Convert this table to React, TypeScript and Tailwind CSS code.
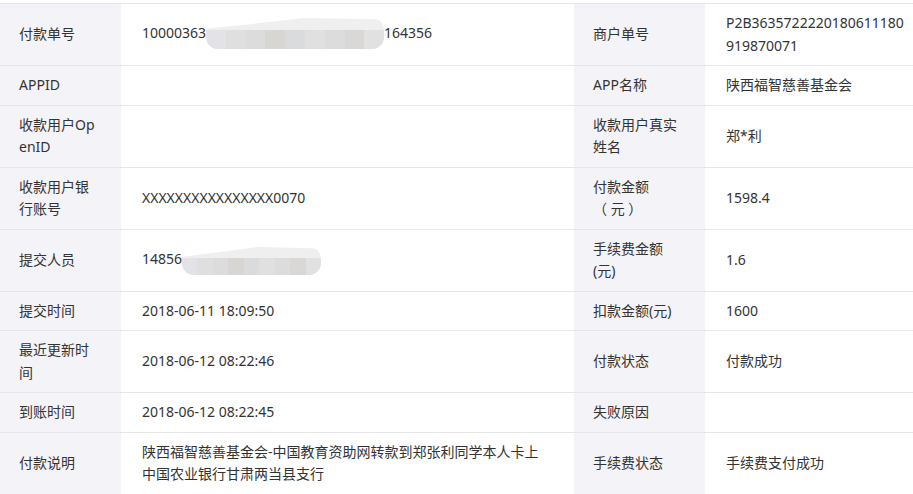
const labelCls = 'bg-[#f3f3f8] pl-[19px] py-2 align-middle text-left font-normal break-all'
const valueCls = 'pl-[21px] pr-2 py-2 align-middle'

function Blur({ w, h, top }: { w: number; h: number; top: number }) {
    // redacted part of the number, drawn as a pixelated smudge
    const cols = ['#e3e3e7', '#dfdfdf', '#dcdcdc', '#d8d6d3', '#dadbdc', '#e0e0e0', '#dcdcdc', '#d9d8d6', '#e1e1e1']
    return (
        <span
            className="inline-block align-middle relative overflow-hidden rounded-[12px] blur-[0.6px]"
            style={{ width: w, height: h, marginTop: top, clipPath: 'polygon(0 35%, 25% 20%, 55% 0, 100% 5%, 100% 100%, 0 100%)' }}
        >
            <span className="absolute inset-0 bg-[#efefef]" />
            <span className="absolute left-0 right-0 bottom-0 top-[38%] flex">
                {cols.map((c, i) => (
                    <span key={i} className="flex-1" style={{ background: c }} />
                ))}
            </span>
        </span>
    )
}

interface Row {
    l1: React.ReactNode
    v1: React.ReactNode
    l2: React.ReactNode
    v2: React.ReactNode
}

const rows: Row[] = [
    {
        l1: '付款单号',
        v1: (
            <span className="whitespace-nowrap">
                10000363
                <Blur w={178} h={31} top={-2} />
                164356
            </span>
        ),
        l2: '商户单号',
        v2: (
            <>
                P2B3635722220180611180
                <br />
                919870071
            </>
        ),
    },
    { l1: 'APPID', v1: '', l2: 'APP名称', v2: '陕西福智慈善基金会' },
    {
        l1: '收款用户OpenID',
        v1: '',
        l2: '收款用户真实姓名',
        v2: '郑*利',
    },
    {
        l1: '收款用户银行账号',
        v1: 'XXXXXXXXXXXXXXXX0070',
        l2: (
            <>
                付款金额
                <br />
                <span className="whitespace-pre">（ 元 ）</span>
            </>
        ),
        v2: '1598.4',
    },
    {
        l1: '提交人员',
        v1: (
            <span className="whitespace-nowrap">
                14856
                <Blur w={139} h={28} top={2} />
            </span>
        ),
        l2: '手续费金额(元)',
        v2: '1.6',
    },
    { l1: '提交时间', v1: '2018-06-11 18:09:50', l2: '扣款金额(元)', v2: '1600' },
    { l1: '最近更新时间', v1: '2018-06-12 08:22:46', l2: '付款状态', v2: '付款成功' },
    { l1: '到账时间', v1: '2018-06-12 08:22:45', l2: '失败原因', v2: '' },
    {
        l1: '付款说明',
        v1: (
            <>
                陕西福智慈善基金会-中国教育资助网转款到郑张利同学本人卡上
                <br />
                中国农业银行甘肃两当县支行
            </>
        ),
        l2: '手续费状态',
        v2: '手续费支付成功',
    },
]

export default function App() {
    return (
        <div className="bg-white pt-[3px] w-[913px] h-[494px] overflow-hidden font-['Noto_Sans','Noto_Sans_CJK_SC',sans-serif] text-[14px] leading-[22.5px] text-[#333]">
            <table className="w-full border-collapse table-fixed">
                <colgroup>
                    <col className="w-[121px]" />
                    <col className="w-[453px]" />
                    <col className="w-[131px]" />
                    <col className="w-[208px]" />
                </colgroup>
                <tbody>
                    {rows.map((r, i) => (
                        <tr key={i} className="border-t border-b border-[#e6e6e6]">
                            <th className={labelCls + ' pr-[24px]'}>{r.l1}</th>
                            <td className={valueCls}>{r.v1}</td>
                            <th className={labelCls + ' pr-[21px]'}>{r.l2}</th>
                            <td className={valueCls + ' pl-[20px]'}>{r.v2}</td>
                        </tr>
                    ))}
                </tbody>
            </table>
        </div>
    )
}
